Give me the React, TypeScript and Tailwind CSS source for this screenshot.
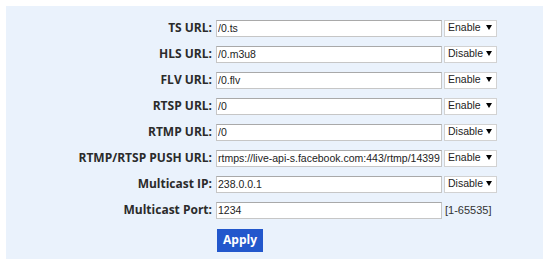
import React from "react";

type Row = {
  label: string;
  value: string;
  mode?: "Enable" | "Disable";
  hint?: string;
};

const rows: Row[] = [
  { label: "TS URL:", value: "/0.ts", mode: "Enable" },
  { label: "HLS URL:", value: "/0.m3u8", mode: "Disable" },
  { label: "FLV URL:", value: "/0.flv", mode: "Enable" },
  { label: "RTSP URL:", value: "/0", mode: "Enable" },
  { label: "RTMP URL:", value: "/0", mode: "Disable" },
  { label: "RTMP/RTSP PUSH URL:", value: "rtmps://live-api-s.facebook.com:443/rtmp/14399", mode: "Enable" },
  { label: "Multicast IP:", value: "238.0.0.1", mode: "Disable" },
  { label: "Multicast Port:", value: "1234", hint: "[1-65535]" },
];

function ModeSelect({ value }: { value: string }) {
  return (
    <div className="flex items-center justify-between w-[53px] h-[17px] bg-white border border-[#d2d2d2] pl-[3px] pr-[4px] text-[10.5px] text-[#222]">
      <span>{value}</span>
      <svg width="6" height="5" viewBox="0 0 6 5" className="mb-[1px]">
        <path d="M0 0h6L3 5z" fill="#000" />
      </svg>
    </div>
  );
}

export default function App() {
  return (
    <div className="w-[550px] h-[265px] bg-white pt-[6px] pl-[6px] font-['Liberation_Sans',Arial,sans-serif]">
      <div className="w-[537px] h-[253px] bg-[#eaf2fc] pt-[9px] pb-[9px]">
        {rows.map((r) => (
          <div key={r.label} className="flex items-center h-[26px]">
            <label className="w-[207px] text-right pr-[1px] font-['Open_Sans',sans-serif] font-bold text-[12px] text-[#2b2b2b]">
              {r.label}
            </label>
            <input
              defaultValue={r.value}
              className="ml-[3px] w-[226px] h-[17px] bg-white border border-[#c6c6c6] border-t-[#a9a9a9] px-[1px] text-[10.5px] text-[#222] outline-none"
            />
            <div className="ml-[2px] flex items-center">
              {r.mode ? (
                <ModeSelect value={r.mode} />
              ) : (
                <span className="pl-[1px] text-[11px] text-[#333]">{r.hint}</span>
              )}
            </div>
          </div>
        ))}
        <div className="pl-[211px] pt-[4px]">
          <button className="w-[46px] h-[23px] bg-[#2257cc] text-white font-['Open_Sans',sans-serif] font-bold text-[12px]">
            Apply
          </button>
        </div>
      </div>
    </div>
  );
}
